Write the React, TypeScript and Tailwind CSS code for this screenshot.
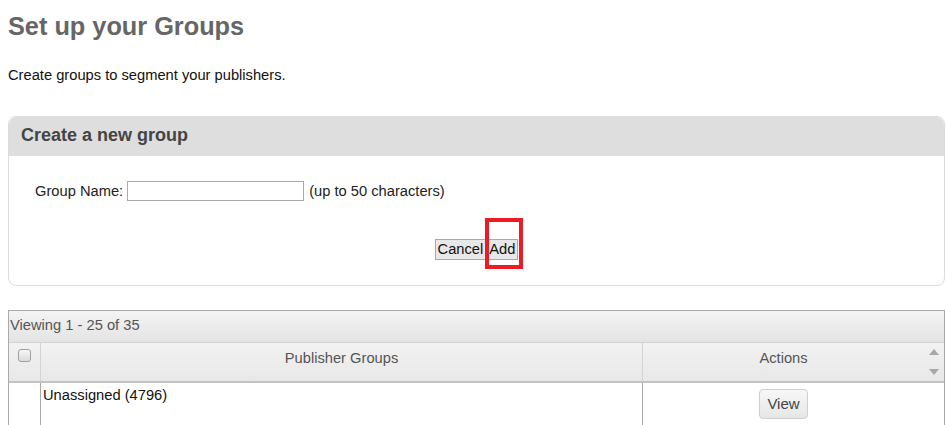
import React from 'react';

const font = { fontFamily: '"Liberation Sans", Arial, sans-serif' };

function CreateGroupPanel() {
  return (
    <section className="ml-2 mr-px mt-[32px] rounded-lg border border-[#dcdcdc] bg-white">
      <div className="flex h-[39px] items-center rounded-t-lg bg-[#dedede] pb-[3px] pl-[12px]">
        <h2 className="text-[18px] font-bold text-[#444]">Create a new group</h2>
      </div>
      <div className="flex items-center pl-[26px] pt-[24px] text-[14.7px] text-[#222]">
        <label htmlFor="groupName" className="mr-[4px]">Group Name:</label>
        <input id="groupName" type="text" className="h-[20px] w-[177px] border border-[#a9a9a9] bg-white" />
        <span className="ml-[5px]">(up to 50 characters)</span>
      </div>
      <div className="flex items-start justify-center pt-[37px] pb-[25px]">
        <button className="h-[21px] border border-[#a9a9a9] bg-[#e8e8e8] px-[2px] text-[14.7px] leading-none text-[#111]">Cancel</button>
        <div className="relative flex">
          <button className="h-[21px] border border-[#a9a9a9] bg-[#e8e8e8] px-[2px] text-[14.7px] leading-none text-[#111]">Add</button>
          <div className="pointer-events-none absolute -left-[1px] -top-[21px] h-[51px] w-[38px] border-[4px] border-[#ed1c24]" />
        </div>
      </div>
    </section>
  );
}

function GroupsTable() {
  return (
    <section className="ml-2 mr-px mt-[24px] border border-b-0 border-[#aaa] text-[14.7px]">
      <div className="h-[31px] bg-gradient-to-b from-[#f3f3f3] to-[#e4e4e4] pl-px pt-[3px] text-[#555]">
        Viewing 1 - 25 of 35
      </div>
      <div className="flex h-[41px] border-t border-b-2 border-t-[#d3d3d3] border-b-[#c2c2c2] bg-gradient-to-b from-[#f2f2f2] to-[#e8e8e8] text-[#555]">
        <div className="flex w-[32px] shrink-0 justify-center border-r border-[#d3d3d3] pt-[6px]">
          <span className="h-[13px] w-[13px] rounded-[3px] border border-[#a0a0a0] bg-gradient-to-b from-[#f6f6f6] to-[#dcdcdc]" />
        </div>
        <div className="flex w-[602px] shrink-0 justify-center border-r border-[#d3d3d3] pt-[4px]">Publisher Groups</div>
        <div className="flex flex-1 justify-center pt-[4px]">Actions</div>
        <div className="flex w-[20px] shrink-0 flex-col items-center justify-between py-[6px]">
          <svg width="10" height="6" viewBox="0 0 10 6"><path d="M0 6 L5 0 L10 6 Z" fill="#a8a8a8" /></svg>
          <svg width="10" height="6" viewBox="0 0 10 6"><path d="M0 0 L5 6 L10 0 Z" fill="#a8a8a8" /></svg>
        </div>
      </div>
      <div className="flex h-[45px] text-[#111]">
        <div className="w-[32px] shrink-0 border-r border-[#aaa]" />
        <div className="w-[602px] shrink-0 border-r border-[#aaa] pl-[2px] pt-[1px]">Unassigned (4796)</div>
        <div className="flex flex-1 justify-center pt-[6px]">
          <button className="h-[30px] rounded-[4px] border border-[#cfcfcf] bg-gradient-to-b from-[#f7f7f7] to-[#e6e6e6] px-[7px] text-[15px] text-[#444]">View</button>
        </div>
        <div className="w-[20px] shrink-0" />
      </div>
    </section>
  );
}

export default function App() {
  return (
    <div className="h-[425px] w-[946px] overflow-hidden bg-white" style={font}>
      <h1 className="pl-2 pt-[11px] text-[25.3px] font-bold leading-[30px] text-[#666]">Set up your Groups</h1>
      <p className="pl-2 pt-[26px] text-[14.7px] leading-[17px] text-[#111]">Create groups to segment your publishers.</p>
      <CreateGroupPanel />
      <GroupsTable />
    </div>
  );
}
